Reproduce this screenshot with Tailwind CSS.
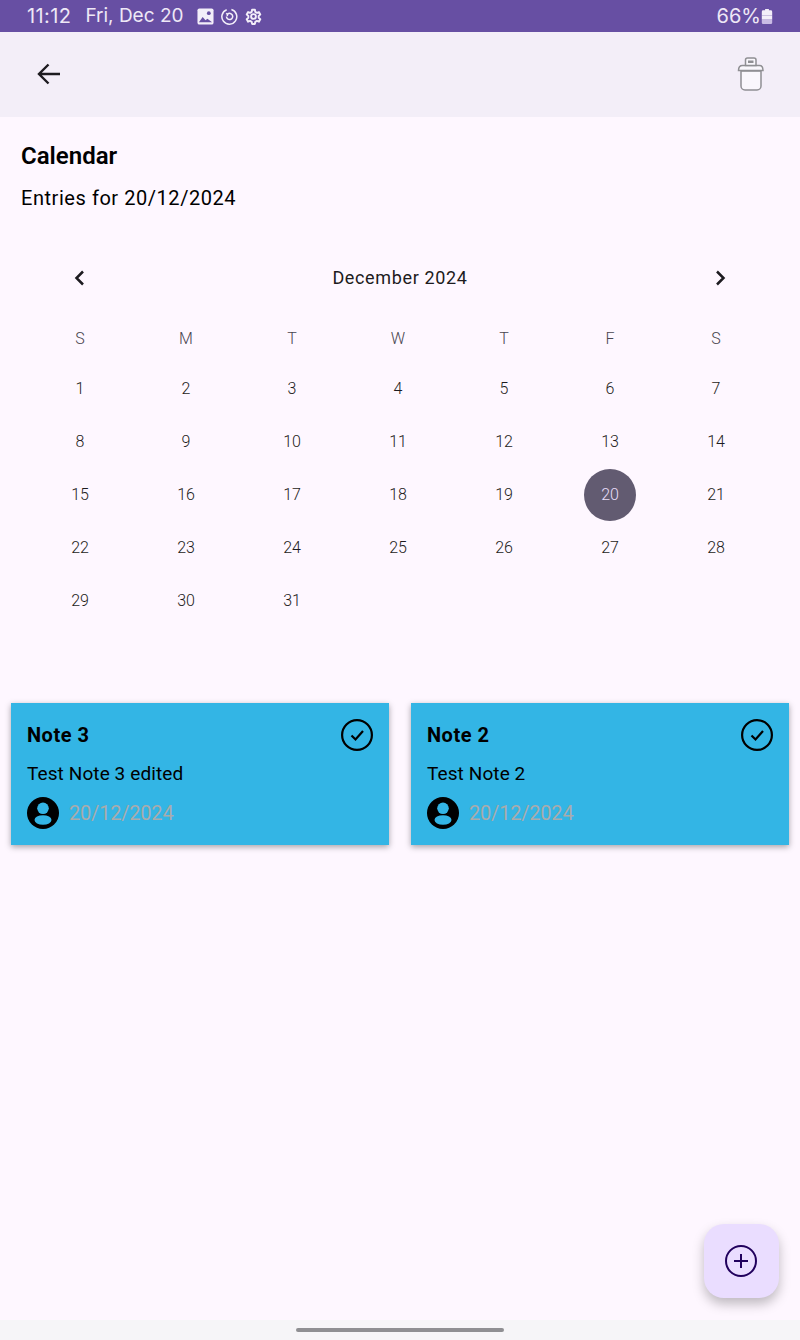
<!DOCTYPE html>
<html lang="en">
<head>
  <meta charset="UTF-8" />
  <meta name="viewport" content="width=device-width, initial-scale=1.0" />
  <title>Calendar</title>
  <script src="https://cdn.jsdelivr.net/npm/@tailwindcss/browser@4"></script>
</head>
<body class="bg-[#fef7ff] font-['Roboto',sans-serif] text-black">
<div class="relative flex h-[1340px] w-[800px] flex-col overflow-hidden">

  <!-- status bar -->
  <div class="flex h-8 items-center justify-between bg-[#674fa3] pl-[27px] pr-[27px] font-['Inter',sans-serif] text-xl text-[#eee8f6]">
    <div class="flex items-center">
      <span class="tracking-[0.4px]">11:12</span>
      <span class="ml-[14px] text-[19px]">Fri, Dec 20</span>
      <div class="ml-[14px] flex items-center gap-[7px]">
        <svg class="h-[17px] w-[17px]" viewBox="0 0 18 18"><rect x="0.500" y="0.500" width="17" height="17" rx="2" fill="#f3eef9"/><circle cx="12.500" cy="5.500" r="2" fill="#674fa3"/><path d="M2 15l4-5.500 3 3.500 2-1.500 5 3.500z" fill="#674fa3"/></svg>
        <svg class="h-[17px] w-[17px]" viewBox="0 0 18 18" fill="none" stroke="#f3eef9" stroke-width="1.600"><path d="M6 1.800a7.900 7.900 0 1 0 5 -.2"/><path d="M5.800 9a3.300 3.300 0 1 0 1.200-2.600M5.400 5.600l1.700 1-.6 1.900"/></svg>
        <svg class="h-[17px] w-[17px]" viewBox="0 0 24 24" fill="none" stroke="#f3eef9" stroke-width="2.700"><circle cx="12" cy="12" r="3.400"/><path d="M10 2.500h4l.5 3 2.300 1.300 2.800-1.100 2 3.500-2.300 1.900v2.800l2.300 1.900-2 3.500-2.800-1.100-2.300 1.300-.5 3h-4l-.5-3-2.300-1.300-2.800 1.100-2-3.500 2.300-1.900v-2.800L2.400 9.200l2-3.500 2.800 1.100 2.300-1.300z" stroke-linejoin="round"/></svg>
      </div>
    </div>
    <div class="flex items-center">
      <span class="-ml-px">66%</span>
      <svg class="h-[17px] w-3" viewBox="0 0 12 18"><path d="M4 1h4v1.500h2a1.500 1.500 0 0 1 1.500 1.500v4H.5V4A1.500 1.500 0 0 1 2 2.500h2z" fill="#f3eef9"/><path d="M.5 12h11v3.500A1.500 1.500 0 0 1 10 17H2a1.500 1.500 0 0 1-1.500-1.500z" fill="#c9bbe4"/><rect x=".5" y="8" width="11" height="4" fill="#f3eef9"/></svg>
    </div>
  </div>

  <!-- app bar -->
  <div class="flex h-[85px] items-center justify-between bg-[#f3eef8] pl-[37px] pr-[35px]">
    <svg class="-mt-0.5 h-6 w-6" viewBox="0 0 24 24" fill="none" stroke="#1d1b20" stroke-width="2.400"><path d="M23 12H2M11.500 2.500 2 12l9.500 9.500"/></svg>
    <svg class="h-9 w-7" viewBox="0 0 28 36" fill="#f9f7fc" stroke="#8f8f93" stroke-width="1.500"><path d="M4 14v15a4 4 0 0 0 4 4h12a4 4 0 0 0 4-4V14z"/><path d="M1.500 13.500c0-4 2-5 4-5h17c2 0 3.500 1 3.500 5z"/><path d="M8.500 8.500V3a2 2 0 0 1 2-2h6.500a2 2 0 0 1 2 2v5.500z"/><rect x="11" y="3.500" width="5.500" height="2.500" fill="#8f8f93" stroke="none"/></svg>
  </div>

  <!-- content -->
  <div class="flex-1">
    <div class="pl-[21px] pt-[26px]">
      <h1 class="text-2xl leading-[26px] font-semibold">Calendar</h1>
      <p class="mt-[17px] text-xl leading-[24px] tracking-[0.55px]">Entries for 20/12/2024</p>
    </div>

    <div class="mt-[40px]">
      <div class="flex h-[56px] items-center justify-between px-[68px] text-[#1d1b20]">
        <svg class="h-6 w-6" viewBox="0 0 24 24" fill="none" stroke="currentColor" stroke-width="2.500"><path d="M15 5.500 8.500 12l6.500 6.500"/></svg>
        <span class="text-lg font-[450] tracking-[0.65px]">December 2024</span>
        <svg class="h-6 w-6" viewBox="0 0 24 24" fill="none" stroke="currentColor" stroke-width="2.500"><path d="M9 5.500 15.500 12 9 18.500"/></svg>
      </div>

      <div class="ml-[27px] mt-[10px] grid w-[742px] grid-cols-7 text-center text-base leading-[53px] font-[350] text-[#1d1b20]">
        <div class="h-[46px] leading-[46px] text-[#49454f]">S</div><div class="h-[46px] leading-[46px] text-[#49454f]">M</div><div class="h-[46px] leading-[46px] text-[#49454f]">T</div><div class="h-[46px] leading-[46px] text-[#49454f]">W</div><div class="h-[46px] leading-[46px] text-[#49454f]">T</div><div class="h-[46px] leading-[46px] text-[#49454f]">F</div><div class="h-[46px] leading-[46px] text-[#49454f]">S</div>
        <div>1</div><div>2</div><div>3</div><div>4</div><div>5</div><div>6</div><div>7</div>
        <div>8</div><div>9</div><div>10</div><div>11</div><div>12</div><div>13</div><div>14</div>
        <div>15</div><div>16</div><div>17</div><div>18</div><div>19</div>
        <div class="flex h-[53px] items-center justify-center"><span class="flex h-[52px] w-[52px] items-center justify-center rounded-full bg-[#625b71] text-[#e8def8]">20</span></div>
        <div>21</div>
        <div>22</div><div>23</div><div>24</div><div>25</div><div>26</div><div>27</div><div>28</div>
        <div>29</div><div>30</div><div>31</div>
      </div>
    </div>

    <div class="mt-[76px] flex gap-[22px] px-[11px]">
      <div class="h-[142px] w-[378px] bg-[#33b5e5] p-4 shadow-[0_2px_6px_rgba(0,0,0,0.35)]">
        <div class="flex h-8 items-center justify-between">
          <span class="text-xl font-bold tracking-[0.5px]">Note 3</span>
          <svg class="h-8 w-8" viewBox="0 0 32 32" fill="none" stroke="#000" stroke-width="2.200"><circle cx="16" cy="16" r="14.900"/><path d="M10.500 16.500l4 4 7.500-8.500"/></svg>
        </div>
        <p class="mt-[13px] text-[19px] leading-[20px] tracking-[0.1px]">Test Note 3 edited</p>
        <div class="mt-[13px] flex items-center">
          <svg class="h-8 w-8" viewBox="0 0 32 32"><circle cx="16" cy="16" r="16" fill="#000"/><circle cx="16" cy="11.300" r="5.800" fill="#33b5e5"/><ellipse cx="16" cy="23" rx="8.500" ry="4.800" fill="#33b5e5"/></svg>
          <span class="ml-[11px] -translate-x-px text-xl tracking-[-0.2px] text-[#a9abac]">20/12/2024</span>
        </div>
      </div>
      <div class="h-[142px] w-[378px] bg-[#33b5e5] p-4 shadow-[0_2px_6px_rgba(0,0,0,0.35)]">
        <div class="flex h-8 items-center justify-between">
          <span class="text-xl font-bold tracking-[0.5px]">Note 2</span>
          <svg class="h-8 w-8" viewBox="0 0 32 32" fill="none" stroke="#000" stroke-width="2.200"><circle cx="16" cy="16" r="14.900"/><path d="M10.500 16.500l4 4 7.500-8.500"/></svg>
        </div>
        <p class="mt-[13px] text-[19px] leading-[20px] tracking-[0.1px]">Test Note 2</p>
        <div class="mt-[13px] flex items-center">
          <svg class="h-8 w-8" viewBox="0 0 32 32"><circle cx="16" cy="16" r="16" fill="#000"/><circle cx="16" cy="11.300" r="5.800" fill="#33b5e5"/><ellipse cx="16" cy="23" rx="8.500" ry="4.800" fill="#33b5e5"/></svg>
          <span class="ml-[11px] -translate-x-px text-xl tracking-[-0.2px] text-[#a9abac]">20/12/2024</span>
        </div>
      </div>
    </div>
  </div>

  <!-- nav bar -->
  <div class="flex h-5 items-center justify-center bg-[#f6f5f8]">
    <div class="h-1 w-[208px] rounded-full bg-[#8f8f93]"></div>
  </div>

  <!-- fab -->
  <button class="absolute left-[704px] top-[1224px] flex h-[74px] w-[75px] items-center justify-center rounded-[20px] bg-[#eaddff] shadow-[0_6px_12px_rgba(0,0,0,0.25)]">
    <svg class="h-8 w-8 -translate-x-px" viewBox="0 0 32 32" fill="none" stroke="#21005d" stroke-width="2"><circle cx="16" cy="16" r="15"/><path d="M16 9v14M9 16h14"/></svg>
  </button>
</div>
</body>
</html>
